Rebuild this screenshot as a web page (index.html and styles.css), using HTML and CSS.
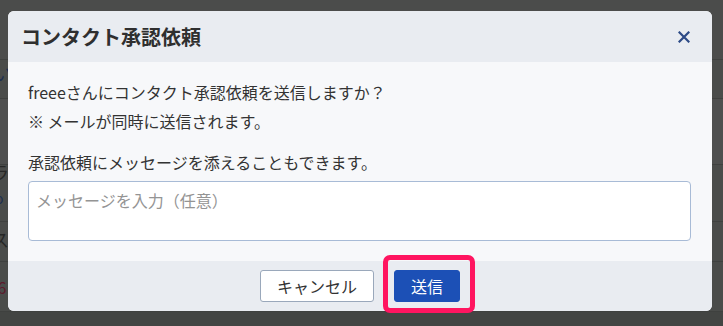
FILE: index.html
```html
<!DOCTYPE html>
<html lang="ja">
<head>
<meta charset="utf-8">
<title>コンタクト承認依頼</title>
<link rel="stylesheet" href="styles.css">
</head>
<body>
<div class="page">
  <div class="row r1"></div>
  <div class="row r2"><span class="bgtext blue">い</span></div>
  <div class="row r3"></div>
  <div class="row r4"><span class="bgtext t1">ガ</span><span class="bgtext t2">ラ</span><span class="bgtext blue small">o</span></div>
  <div class="row r5"><span class="bgtext">ス</span></div>
  <div class="row r6"><span class="bgtext red">E6</span></div>
  <div class="row r7"></div>
</div>

<div class="modal" role="dialog">
  <div class="modal-header">
    <h1 class="modal-title">コンタクト承認依頼</h1>
    <button class="close" aria-label="閉じる">
      <svg width="12" height="12" viewBox="0 0 12 12"><path d="M1.5 1.5 L10.5 10.5 M10.5 1.5 L1.5 10.5" stroke="#2c4a86" stroke-width="2.2" stroke-linecap="square"/></svg>
    </button>
  </div>
  <div class="modal-body">
    <p class="msg">freeeさんにコンタクト承認依頼を送信しますか？<br>※ メールが同時に送信されます。</p>
    <p class="hint">承認依頼にメッセージを添えることもできます。</p>
    <textarea class="input" placeholder="メッセージを入力（任意）"></textarea>
  </div>
  <div class="modal-footer">
    <button class="btn btn-cancel">キャンセル</button>
    <span class="send-wrap">
      <button class="btn btn-send">送信</button>
      <span class="highlight"></span>
    </span>
  </div>
</div>
</body>
</html>
```

FILE: styles.css
```css
* { box-sizing: border-box; }
html, body { margin: 0; padding: 0; }
body {
  width: 723px;
  height: 326px;
  overflow: hidden;
  background: #4a4c4a;
  font-family: "Noto Sans CJK JP", "Noto Sans", sans-serif;
  position: relative;
}
.page { display: flex; flex-direction: column; }
.row {
  border-bottom: 1px solid #3f413f;
  position: relative;
  overflow: hidden;
}
.r1 { height: 60px; background: #4b4c4b; }
.r2 { height: 39px; background: #4a4c4a; }
.r3 { height: 66px; background: #4e4f4e; }
.r4 { height: 57px; background: #4a4c4a; }
.r5 { height: 40px; background: #4a4c4a; }
.r6 { height: 50px; background: #4a4c4a; }
.r7 { height: 20px; background: #434543; }
.bgtext {
  position: absolute;
  left: -9px;
  font-size: 18px;
  line-height: 20px;
  color: #262726;
}
.r2 .bgtext { top: 3px; left: -6px; }
.r4 .bgtext.t1 { top: -27px; }
.r4 .bgtext.t2 { top: -3px; }
.r4 .bgtext.small { top: 25px; left: -5px; font-size: 14px; line-height: 16px; }
.r5 .bgtext { top: 7px; }
.r6 .bgtext { top: 15px; left: -12px; font-size: 16px; }
.blue { color: #1d2f4f; }
.red { color: #5c1a2c; }

.modal {
  position: absolute;
  left: 8px;
  top: 11px;
  width: 704px;
  border-radius: 6px;
  background: #f7f8fa;
}
.modal-header {
  height: 51px;
  background: #e9ecf1;
  border-radius: 6px 6px 0 0;
  display: flex;
  align-items: center;
  justify-content: space-between;
  padding: 0 22px 0 13px;
}
.modal-title {
  margin: 0;
  font-size: 20px;
  font-weight: 700;
  color: #2f2f2f;
  line-height: 28px;
}
.close {
  background: none;
  border: 0;
  padding: 0;
  width: 12px;
  height: 12px;
  display: flex;
}
.modal-body {
  padding: 16px 21px 20px 20px;
  color: #333;
  font-size: 16px;
}
.msg {
  margin: 0;
  line-height: 29px;
}
.hint {
  margin: 12px 0 0 0;
  line-height: 29px;
}
.input {
  display: block;
  margin-top: 4px;
  width: 100%;
  height: 60px;
  border: 1px solid #a8bbd6;
  border-radius: 4px;
  background: #fff;
  resize: none;
  font-family: inherit;
  font-size: 16px;
  line-height: 24px;
  padding: 6px 7px;
  color: #333;
}
.input::placeholder { color: #949494; }
.modal-footer {
  height: 50px;
  background: #e9ecf1;
  border-radius: 0 0 6px 6px;
  display: flex;
  align-items: center;
  justify-content: center;
  gap: 20px;
}
.btn {
  height: 32px;
  font-family: inherit;
  font-size: 16px;
  line-height: 20px;
  padding: 0 16px;
  border-radius: 3px;
  white-space: nowrap;
  cursor: pointer;
}
.btn-cancel {
  background: #fff;
  border: 1px solid #9aa8bb;
  color: #323232;
}
.btn-send {
  background: #1c50b6;
  border: 1px solid #1c50b6;
  color: #fff;
}
.send-wrap { position: relative; display: flex; }
.highlight {
  position: absolute;
  left: -11px;
  right: -15px;
  top: -15px;
  bottom: -11px;
  border: 5px solid #ff1560;
  border-radius: 7px;
  pointer-events: none;
}
```
